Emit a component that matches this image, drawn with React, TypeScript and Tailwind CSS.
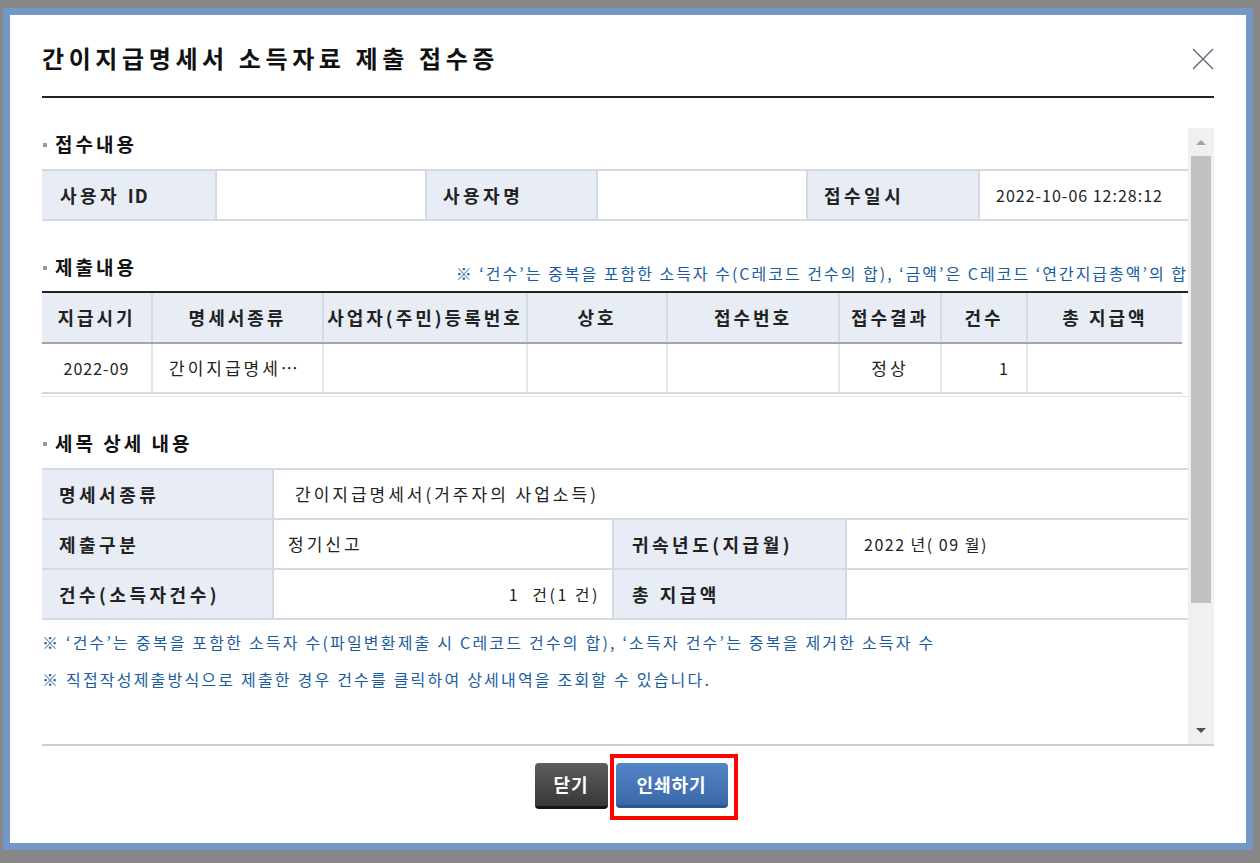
import React from "react";

const LABEL = "bg-[#e8edf5] font-bold text-[18px] tracking-[3.5px] text-[#222]";
const VALUE = "text-[17px] tracking-[3px] text-[#222]";
const NUM = "text-[16px] tracking-[1px] text-[#222]";
const NOTE = "text-[16px] leading-[20px] tracking-[2.2px] text-[#1a5c9e] whitespace-nowrap";

function Heading({ children }: { children: React.ReactNode }) {
  return (
    <div className="flex items-center">
      <span className="w-[4px] h-[4px] bg-[#9a9a9a] ml-[1px] mr-[8px] mt-[1px]" />
      <span className="text-[19px] leading-[24px] font-bold tracking-[3px] text-[#111]">{children}</span>
    </div>
  );
}

export default function App() {
  const cols2 = [
    { w: "w-[109px]", h: "지급시기" },
    { w: "w-[171px]", h: "명세서종류" },
    { w: "w-[204px]", h: "사업자(주민)등록번호" },
    { w: "w-[140px]", h: "상호" },
    { w: "w-[172px]", h: "접수번호" },
    { w: "w-[102px]", h: "접수결과" },
    { w: "w-[86px]", h: "건수" },
    { w: "w-[156px]", h: "총 지급액" },
  ];

  return (
    <div className="w-[1260px] h-[863px] bg-[#878787] pt-[8px] pl-[3px] font-['Noto_Sans_CJK_KR','Noto_Sans',sans-serif]">
      <div className="w-[1250px] h-[842px] border-[7px] border-[#7398c6] bg-white px-[32px] flex flex-col">
        {/* header */}
        <div className="h-[81px] pt-[28px] flex items-start justify-between">
          <h1 className="text-[24px] leading-[30px] font-bold tracking-[4.6px] text-[#111]">
            간이지급명세서 소득자료 제출 접수증
          </h1>
          <svg width="22" height="22" viewBox="0 0 22 22" className="mt-[5px]">
            <path d="M1 1 L21 21 M21 1 L1 21" stroke="#5a6270" strokeWidth="1.3" fill="none" />
          </svg>
        </div>
        <div className="h-[2px] bg-[#222]" />

        {/* scroll area */}
        <div className="mt-[30px] h-[618px] flex border-b-2 border-[#cfcfcf]">
          <div className="w-[1146px]">
            <div className="h-[41px] pt-[4px]">
              <Heading>접수내용</Heading>
            </div>
            <div className="border-t-2 border-[#d3dae4]">
              <div className="flex h-[50px] border-b-2 border-[#d3dae4]">
                <div className={`w-[173px] pl-[18px] flex items-center ${LABEL}`}>
                  사용자&nbsp;<span className="tracking-[1px]">ID</span>
                </div>
                <div className="w-[210px] border-l-2 border-[#d3dae4]" />
                <div className={`w-[171px] pl-[16px] flex items-center border-l-2 border-[#d3dae4] ${LABEL}`}>사용자명</div>
                <div className="w-[210px] border-l-2 border-[#d3dae4]" />
                <div className={`w-[172px] pl-[16px] flex items-center border-l-2 border-[#d3dae4] ${LABEL}`}>접수일시</div>
                <div className={`w-[210px] pl-[16px] flex items-center border-l-2 border-[#d3dae4] ${NUM}`}>2022-10-06 12:28:12</div>
              </div>
            </div>

            <div className="h-[70px] flex items-end justify-between">
              <div className="mb-[12px]">
                <Heading>제출내용</Heading>
              </div>
              <p className="mb-[8px] text-[16px] leading-[20px] tracking-[2px] text-[#1a5c9e] whitespace-nowrap">
                ※ ‘건수’는 중복을 포함한 소득자 수(C레코드 건수의 합), ‘금액’은 C레코드 ‘연간지급총액’의 합
              </p>
            </div>
            <div className="border-t-2 border-[#222]">
              <div className="w-[1140px] flex h-[51px] border-b-2 border-[#a6a6a6] bg-[#e8edf5]">
                {cols2.map((c, i) => (
                  <div
                    key={c.h}
                    className={`${c.w} flex items-center justify-center whitespace-nowrap ${i > 0 ? "border-l-2 border-[#d3dae4]" : ""} font-bold text-[18px] tracking-[3px] text-[#222]`}
                  >
                    {c.h}
                  </div>
                ))}
              </div>
              <div className="w-[1140px] flex h-[50px] border-b-2 border-[#d3dae4]">
                <div className={`w-[109px] flex items-center justify-center ${NUM}`}>2022-09</div>
                <div className={`w-[171px] pl-[16px] flex items-center border-l-2 border-[#e3e8ee] whitespace-nowrap ${VALUE}`}>간이지급명세…</div>
                <div className="w-[204px] border-l-2 border-[#e3e8ee]" />
                <div className="w-[140px] border-l-2 border-[#e3e8ee]" />
                <div className="w-[172px] border-l-2 border-[#e3e8ee]" />
                <div className={`w-[102px] flex items-center justify-center border-l-2 border-[#e3e8ee] ${VALUE}`}>정상</div>
                <div className={`w-[86px] pr-[17px] flex items-center justify-end border-l-2 border-[#e3e8ee] ${NUM}`}>1</div>
                <div className="w-[156px] border-l-2 border-[#e3e8ee]" />
              </div>
              <div className="mt-[2px] h-[1px] bg-[#e4e4e4]" />
            </div>

            <div className="h-[71px] flex items-end">
              <div className="mb-[13px]">
                <Heading>세목 상세 내용</Heading>
              </div>
            </div>
            <div className="border-t-2 border-[#d3dae4]">
              <div className="flex h-[50px] border-b-2 border-[#d3dae4]">
                <div className={`w-[230px] pl-[17px] flex items-center ${LABEL}`}>명세서종류</div>
                <div className={`w-[916px] pl-[21px] flex items-center border-l-2 border-[#d3dae4] ${VALUE}`}>
                  간이지급명세서(거주자의 사업소득)
                </div>
              </div>
              <div className="flex h-[50px] border-b-2 border-[#d3dae4]">
                <div className={`w-[230px] pl-[17px] flex items-center ${LABEL}`}>제출구분</div>
                <div className={`w-[340px] pl-[14px] flex items-center border-l-2 border-[#d3dae4] ${VALUE}`}>정기신고</div>
                <div className={`w-[233px] pl-[18px] flex items-center border-l-2 border-[#d3dae4] whitespace-nowrap ${LABEL}`}>귀속년도(지급월)</div>
                <div className="w-[343px] pl-[17px] flex items-center border-l-2 border-[#d3dae4] text-[16px] tracking-[1.5px] text-[#222]">2022 년( 09 월)</div>
              </div>
              <div className="flex h-[50px] border-b-2 border-[#d3dae4]">
                <div className={`w-[230px] pl-[17px] flex items-center whitespace-nowrap ${LABEL}`}>건수(소득자건수)</div>
                <div className="w-[340px] pr-[12px] flex items-center justify-end border-l-2 border-[#d3dae4] text-[16px] tracking-[2.5px] text-[#222]">
                  1&nbsp;&nbsp;건(1 건)
                </div>
                <div className={`w-[233px] pl-[18px] flex items-center border-l-2 border-[#d3dae4] ${LABEL}`}>총 지급액</div>
                <div className="w-[343px] border-l-2 border-[#d3dae4]" />
              </div>
            </div>

            <p className={`mt-[12px] ${NOTE}`}>
              ※ ‘건수’는 중복을 포함한 소득자 수(파일변환제출 시 C레코드 건수의 합), ‘소득자 건수’는 중복을 제거한 소득자 수
            </p>
            <p className={`mt-[17px] ${NOTE}`}>
              ※ 직접작성제출방식으로 제출한 경우 건수를 클릭하여 상세내역을 조회할 수 있습니다.
            </p>
          </div>

          {/* scrollbar */}
          <div className="w-[26px] bg-[#f0f0f0] flex flex-col items-center">
            <div className="h-[28px] flex items-center justify-center">
              <div className="w-0 h-0 border-l-[5px] border-r-[5px] border-b-[5px] border-l-transparent border-r-transparent border-b-[#a3a3a3]" />
            </div>
            <div className="w-[20px] h-[447px] bg-[#c1c1c1]" />
            <div className="flex-1" />
            <div className="h-[28px] flex items-center justify-center">
              <div className="w-0 h-0 border-l-[5px] border-r-[5px] border-t-[5px] border-l-transparent border-r-transparent border-t-[#505050]" />
            </div>
          </div>
        </div>

        {/* buttons */}
        <div className="pt-[17px] flex justify-center gap-[8px] pl-[6px]">
          <button className="w-[73px] h-[46px] rounded-[4px] bg-gradient-to-b from-[#5e5e5e] to-[#383838] border-b-[3px] border-[#151515] text-white font-bold text-[18px] tracking-[1px]">
            닫기
          </button>
          <div className="relative">
            <button className="w-[112px] h-[45px] rounded-[4px] bg-gradient-to-b from-[#5385c6] to-[#3a69a9] border-b-[3px] border-[#2b5590] text-white font-bold text-[18px] tracking-[1px]">
              인쇄하기
            </button>
            <div className="absolute -left-[6px] -right-[10px] -top-[9px] -bottom-[11px] border-4 border-[#ff0000]" />
          </div>
        </div>
      </div>
    </div>
  );
}
